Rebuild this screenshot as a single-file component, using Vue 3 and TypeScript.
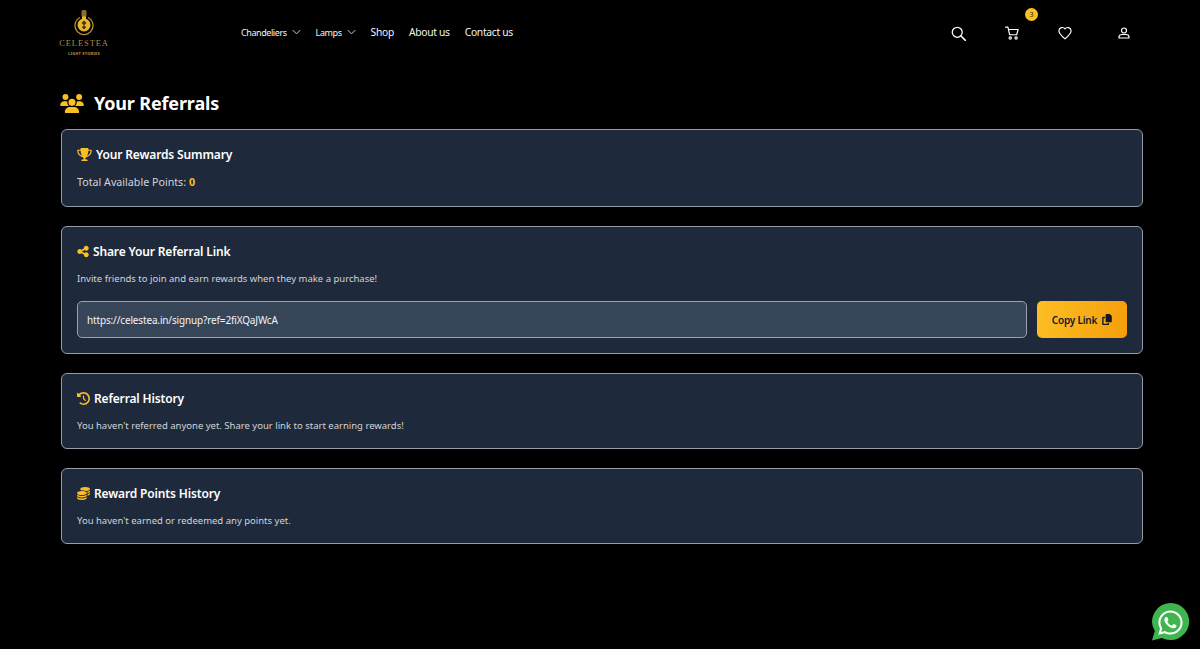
<script setup lang="ts">
const navItems = [
  { label: 'Chandeliers', small: true, chevron: true },
  { label: 'Lamps', small: true, chevron: true },
  { label: 'Shop', small: false, chevron: false },
  { label: 'About us', small: false, chevron: false },
  { label: 'Contact us', small: false, chevron: false },
]
const link = 'https://celestea.in/signup?ref=2fiXQaJWcA'
</script>

<template>
  <div class="page">
    <header class="header">
      <div class="logo">
        <svg class="logo__bulb" viewBox="0 0 20 26" width="20" height="26">
          <rect x="7.500" y="0" width="5" height="7" rx="1.500" fill="#8a6d2c" />
          <path d="M6 7.500A9 9 0 1 0 14 7.500" fill="none" stroke="#b8902f" stroke-width="1.300" />
          <path d="M8 6.500h4v2.200c2.600 1 4.500 3.500 4.500 6.300a6.500 6.500 0 0 1-13 0c0-2.800 1.900-5.300 4.500-6.300z" fill="#e8b62c" />
          <path d="M10 10.500l2.500 2.500-2.500 2.500-2.500-2.500zM10 15l2.200 2.200-2.200 2.200-2.200-2.200z" fill="#4a3608" />
        </svg>
        <span class="logo__name">CELESTEA</span>
        <span class="logo__sub">LIGHT STORIES</span>
      </div>
      <nav class="nav">
        <a v-for="item in navItems" :key="item.label" class="nav__item" :class="{ 'nav__item--small': item.small }">
          {{ item.label }}
          <svg v-if="item.chevron" class="nav__chevron" viewBox="0 0 12 8" width="9" height="6">
            <path d="M1 1.500l5 5 5-5" fill="none" stroke="#e5e5e5" stroke-width="1.200" />
          </svg>
        </a>
      </nav>
      <div class="actions">
        <svg class="actions__icon" viewBox="0 0 24 24" width="15" height="15">
          <circle cx="10" cy="10" r="8" fill="none" stroke="#fff" stroke-width="2" />
          <path d="M16 16l7 7" stroke="#fff" stroke-width="2.400" stroke-linecap="round" />
        </svg>
        <span class="cart">
          <svg class="actions__icon" viewBox="0 0 24 24" width="14" height="14">
            <path d="M1 2h4l3 13h12l2.500-9H6" fill="none" stroke="#fff" stroke-width="2" stroke-linejoin="round" stroke-linecap="round" />
            <circle cx="9" cy="20.500" r="2" fill="none" stroke="#fff" stroke-width="2" />
            <circle cx="19" cy="20.500" r="2" fill="none" stroke="#fff" stroke-width="2" />
          </svg>
          <span class="cart__badge">3</span>
        </span>
        <svg class="actions__icon" viewBox="0 0 24 24" width="14" height="14">
          <path d="M12 22C5 16 1.500 12.500 1.500 8A5.800 5.800 0 0 1 12 5a5.800 5.800 0 0 1 10.500 3c0 4.500-3.500 8-10.500 14z" fill="none" stroke="#fff" stroke-width="2" stroke-linejoin="round" />
        </svg>
        <svg class="actions__icon actions__icon--user" viewBox="0 0 24 24" width="12" height="12">
          <circle cx="12" cy="7" r="5" fill="none" stroke="#fff" stroke-width="2.400" />
          <path d="M2 22v-2c0-3 3-5 6-5h8c3 0 6 2 6 5v2z" fill="none" stroke="#fff" stroke-width="2.400" stroke-linejoin="round" />
        </svg>
      </div>
    </header>

    <main class="main">
      <h1 class="title">
        <svg class="title__icon" viewBox="0 0 640 512" width="24" height="19">
          <path fill="#fbbf24" d="M144 0a80 80 0 1 1 0 160A80 80 0 1 1 144 0zM512 0a80 80 0 1 1 0 160A80 80 0 1 1 512 0zM0 298.700C0 239.800 47.800 192 106.700 192h42.700c15.900 0 31 3.500 44.600 9.700c-1.300 7.200-1.900 14.700-1.900 22.300c0 38.200 16.800 72.500 43.300 96c-.2 0-.4 0-.7 0H21.300C9.600 320 0 310.400 0 298.700zM405.300 320c-.2 0-.4 0-.7 0c26.600-23.500 43.300-57.800 43.300-96c0-7.600-.7-15-1.900-22.300c13.600-6.300 28.700-9.700 44.600-9.700h42.700C592.200 192 640 239.800 640 298.700c0 11.800-9.600 21.300-21.300 21.300H405.300zM224 224a96 96 0 1 1 192 0 96 96 0 1 1 -192 0zM128 485.300C128 411.700 187.700 352 261.300 352H378.700C452.300 352 512 411.700 512 485.300c0 14.700-11.900 26.700-26.700 26.700H154.700c-14.700 0-26.700-11.900-26.700-26.700z" />
        </svg>
        Your Referrals
      </h1>

      <section class="card card--summary">
        <h2 class="card__title">
          <svg viewBox="0 0 576 512" width="15" height="13">
            <path fill="#fbbf24" d="M400 0H176c-26.500 0-48.100 21.800-47.100 48.200c.2 5.300 .4 10.600 .7 15.800H24C10.700 64 0 74.700 0 88c0 92.600 33.500 157 78.500 200.700c44.300 43.100 98.300 64.800 138.100 75.800c23.400 6.500 39.400 26 39.400 45.600c0 20.900-17 37.900-37.900 37.900H192c-17.700 0-32 14.300-32 32s14.300 32 32 32H384c17.700 0 32-14.300 32-32s-14.300-32-32-32H357.900C337 448 320 431 320 410.100c0-19.600 15.900-39.200 39.400-45.600c39.900-11 93.900-32.700 138.200-75.800C542.500 245 576 180.600 576 88c0-13.300-10.700-24-24-24H446.400c.3-5.200 .5-10.400 .7-15.800C448.100 21.800 426.500 0 400 0zM48.900 112h84.400c9.100 90.100 29.200 150.300 51.900 190.600c-24.900-11-50.800-26.500-73.200-48.300c-32-31.100-58-76-63-142.300zM464.100 254.300c-22.400 21.800-48.300 37.300-73.200 48.300c22.700-40.300 42.800-100.500 51.900-190.600h84.400c-5.100 66.300-31.100 111.200-63 142.300z" />
          </svg>
          Your Rewards Summary
        </h2>
        <p class="points">Total Available Points: <strong>0</strong></p>
      </section>

      <section class="card card--share">
        <h2 class="card__title">
          <svg viewBox="0 0 448 512" width="12" height="13">
            <path fill="#fbbf24" d="M352 224c53 0 96-43 96-96s-43-96-96-96s-96 43-96 96c0 4 .2 8 .7 11.900l-94.100 47C145.400 170.200 121.900 160 96 160c-53 0-96 43-96 96s43 96 96 96c25.900 0 49.400-10.200 66.600-26.900l94.100 47c-.5 3.900-.7 7.800-.7 11.900c0 53 43 96 96 96s96-43 96-96s-43-96-96-96c-25.900 0-49.400 10.200-66.600 26.900l-94.100-47c.5-3.900 .7-7.800 .7-11.900s-.2-8-.7-11.900l94.100-47C302.600 213.800 326.100 224 352 224z" />
          </svg>
          Share Your Referral Link
        </h2>
        <p class="card__text">Invite friends to join and earn rewards when they make a purchase!</p>
        <div class="share">
          <input class="share__input" :value="link" readonly />
          <button class="share__btn">
            Copy Link
            <svg viewBox="0 0 448 512" width="10" height="11">
              <path fill="#111827" d="M208 0H332.100c12.700 0 24.900 5.100 33.900 14.100l67.900 67.900c9 9 14.100 21.200 14.100 33.900V336c0 26.500-21.500 48-48 48H208c-26.500 0-48-21.500-48-48V48c0-26.500 21.500-48 48-48zM48 128h80v64H64V448H256V416h64v48c0 26.500-21.500 48-48 48H48c-26.500 0-48-21.500-48-48V176c0-26.500 21.500-48 48-48z" />
            </svg>
          </button>
        </div>
      </section>

      <section class="card card--info">
        <h2 class="card__title">
          <svg viewBox="0 0 512 512" width="13" height="13">
            <path fill="#fbbf24" d="M75 75L41 41C25.900 25.900 0 36.600 0 57.900V168c0 13.300 10.700 24 24 24H134.100c21.400 0 32.100-25.900 17-41l-30.800-30.800C155 85.500 203 64 256 64c106 0 192 86 192 192s-86 192-192 192c-40.800 0-78.600-12.700-109.700-34.400c-14.500-10.100-34.400-6.600-44.600 7.900s-6.600 34.400 7.900 44.600C151.200 495 201.700 512 256 512c141.400 0 256-114.600 256-256S397.400 0 256 0C185.300 0 121.300 28.700 75 75zm181 53c-13.300 0-24 10.700-24 24V256c0 6.400 2.500 12.500 7 17l72 72c9.400 9.400 24.600 9.400 33.900 0s9.400-24.600 0-33.900l-65-65V152c0-13.300-10.700-24-24-24z" />
          </svg>
          Referral History
        </h2>
        <p class="card__text">You haven't referred anyone yet. Share your link to start earning rewards!</p>
      </section>

      <section class="card card--info">
        <h2 class="card__title">
          <svg viewBox="0 0 512 512" width="13" height="13">
            <path fill="#fbbf24" d="M512 80c0 18-14.300 34.600-38.400 48c-29.100 16.100-72.500 27.500-122.300 30.900c-3.700-1.800-7.400-3.500-11.300-5C300.600 137.400 248.200 128 192 128c-8.300 0-16.400 .2-24.500 .6l-1.100-.6C142.300 114.600 128 98 128 80c0-44.200 86-80 192-80S512 35.800 512 80zM160.700 161.100c10.200-.7 20.700-1.100 31.300-1.100c62.200 0 117.400 12.300 152.500 31.400C369.300 204.900 384 221.700 384 240c0 4-.7 7.900-2.100 11.700c-4.600 13.200-17 25.300-35 35.500c-.1 .1-.3 .1-.4 .2c-.3 .2-.6 .3-.9 .5c-35 19.400-90.800 32-153.600 32c-59.600 0-112.900-11.300-148.200-29.100c-1.900-.9-3.700-1.900-5.500-2.900C14.300 274.600 0 258 0 240c0-34.800 53.400-64.500 128-75.400c10.500-1.500 21.400-2.700 32.700-3.500zM416 240c0-21.900-10.600-39.900-24.100-53.400c28.300-4.400 54.200-11.400 76.200-20.500c16.300-6.800 31.500-15.200 43.900-25.500V176c0 19.300-16.500 37.100-43.800 50.900c-14.600 7.400-32.400 13.700-52.400 18.500c.1-1.800 .2-3.500 .2-5.300zm-32 96c0 18-14.300 34.600-38.400 48c-1.800 1-3.600 1.900-5.500 2.900C304.900 404.700 251.600 416 192 416c-62.800 0-118.600-12.600-153.600-32C14.300 370.600 0 354 0 336V300.600c12.500 10.300 27.600 18.700 43.900 25.500C83.400 342.600 135.800 352 192 352s108.600-9.400 148.100-25.900c7.800-3.200 15.300-6.900 22.400-10.900c6.100-3.400 11.800-7.200 17.200-11.200c1.500-1.100 2.900-2.300 4.300-3.400V304v5.700V336zm32 0V304 278.100c19-4.200 36.500-9.500 52.100-16c16.300-6.800 31.500-15.200 43.900-25.500V272c0 10.500-5 21-14.900 30.900c-16.300 16.300-45 29.700-81.300 38.400c.1-1.700 .2-3.500 .2-5.300zM192 448c56.200 0 108.600-9.400 148.100-25.900c16.300-6.800 31.500-15.200 43.900-25.500V432c0 44.200-86 80-192 80S0 476.200 0 432V396.600c12.500 10.300 27.600 18.700 43.900 25.500C83.400 438.600 135.800 448 192 448z" />
          </svg>
          Reward Points History
        </h2>
        <p class="card__text">You haven't earned or redeemed any points yet.</p>
      </section>
    </main>

    <a class="whatsapp">
      <svg viewBox="0 0 40 40" width="39" height="39">
        <path fill="#3fb54f" d="M20 1a19 19 0 1 1-8.800 35.800L1 39.500l2.900-9.700A19 19 0 0 1 20 1z" />
        <g transform="translate(7.500 7) scale(0.0555)">
          <path fill="#fff" d="M380.900 97.100C339 55.100 283.200 32 223.900 32c-122.400 0-222 99.600-222 222 0 39.100 10.200 77.300 29.600 111L0 480l117.700-30.900c32.400 17.700 68.900 27 106.100 27h.1c122.300 0 224.100-99.600 224.100-222 0-59.300-25.200-115-67.100-157zm-157 341.600c-33.200 0-65.700-8.900-94-25.700l-6.700-4-69.800 18.300L72 359.200l-4.400-7c-18.500-29.400-28.200-63.300-28.200-98.200 0-101.700 82.800-184.500 184.600-184.500 49.300 0 95.600 19.200 130.400 54.100 34.800 34.900 56.200 81.200 56.100 130.500 0 101.800-84.900 184.600-186.600 184.600zm101.200-138.200c-5.500-2.800-32.800-16.200-37.900-18-5.100-1.900-8.800-2.800-12.500 2.800-3.700 5.600-14.300 18-17.600 21.800-3.200 3.700-6.500 4.200-12 1.400-32.600-16.300-54-29.100-75.500-66-5.700-9.800 5.700-9.100 16.300-30.300 1.800-3.700 .9-6.900-.5-9.700-1.400-2.800-12.500-30.100-17.100-41.200-4.500-10.800-9.100-9.300-12.500-9.500-3.200-.2-6.900-.2-10.600-.2-3.700 0-9.700 1.400-14.800 6.900-5.100 5.600-19.400 19-19.400 46.300 0 27.300 19.900 53.700 22.600 57.400 2.800 3.700 39.100 59.700 94.800 83.800 35.200 15.200 49 16.500 66.600 13.900 10.700-1.600 32.800-13.400 37.400-26.400 4.600-13 4.600-24.100 3.200-26.400-1.300-2.500-5-3.900-10.500-6.600z" />
        </g>
      </svg>
    </a>
  </div>
</template>

<style>
html,
body {
  background: #000;
}
</style>

<style scoped>
.page {
  position: relative;
  height: 649px;
  overflow: hidden;
  background: #000;
  color: #fff;
  font-family: "Noto Sans", "Open Sans", sans-serif;
}

.header {
  display: flex;
  align-items: flex-start;
  height: 66px;
  padding: 10px 0 0 60px;
  box-sizing: border-box;
}

.logo {
  display: flex;
  flex-direction: column;
  align-items: center;
  width: 48px;
}

.logo__bulb {
  display: block;
}

.logo__name {
  margin-top: 2px;
  font-family: "Liberation Serif", serif;
  font-size: 8.500px;
  line-height: 10px;
  letter-spacing: 0.9px;
  color: #a98b45;
  white-space: nowrap;
}

.logo__sub {
  margin-top: 3px;
  font-size: 4px;
  line-height: 5px;
  font-weight: 700;
  letter-spacing: 0.2px;
  color: #b09650;
  white-space: nowrap;
}

.nav {
  display: flex;
  align-items: center;
  gap: 15px;
  height: 14px;
  margin: 15px 0 0 133px;
}

.nav__item {
  display: flex;
  align-items: center;
  gap: 5px;
  font-size: 10.300px;
  letter-spacing: -0.3px;
  color: #f3f4f6;
  white-space: nowrap;
}

.nav__item--small {
  font-size: 9px;
  letter-spacing: -0.42px;
}

.nav__chevron {
  display: block;
}

.actions {
  display: flex;
  align-items: center;
  gap: 39px;
  height: 16px;
  margin: 15px 0 0 438.500px;
}

.actions__icon {
  display: block;
}

.actions__icon--user {
  margin-left: 7px;
}

.cart {
  position: relative;
  display: block;
}

.cart__badge {
  position: absolute;
  top: -18px;
  left: 19.500px;
  width: 13px;
  height: 13px;
  border-radius: 50%;
  background: #fbbf24;
  color: #111827;
  font-size: 7px;
  line-height: 13px;
  text-align: center;
}

.main {
  padding: 0 57px 0 60px;
}

.title {
  display: flex;
  align-items: center;
  gap: 10px;
  height: 26px;
  margin: 0 0 13px;
  padding-top: 24px;
  font-size: 18px;
  font-weight: 700;
  letter-spacing: -0.15px;
}

.title__icon {
  display: block;
}

.card {
  box-sizing: border-box;
  margin: 0 0 19px 1px;
  padding: 14.500px 15px 0;
  border: 1px solid #969ca6;
  border-radius: 6px;
  background: #1e293b;
}

.card--summary {
  height: 78px;
}

.card--share {
  height: 128px;
}

.card--info {
  height: 76px;
}

.card__title {
  display: flex;
  align-items: center;
  gap: 4px;
  height: 20px;
  margin: 0;
  font-size: 12px;
  font-weight: 600;
  letter-spacing: -0.15px;
  color: #fff;
}

.card__title svg {
  display: block;
  flex: none;
}

.card__text {
  margin: 10.500px 0 0;
  font-size: 9.500px;
  line-height: 14px;
  color: #d1d5db;
}

.points {
  margin: 10.500px 0 0;
  font-size: 10.700px;
  line-height: 14px;
  color: #d1d5db;
}

.points strong {
  color: #fbbf24;
}

.share {
  display: flex;
  gap: 10px;
  margin-top: 15px;
}

.share__input {
  flex: 1;
  box-sizing: border-box;
  height: 37px;
  padding: 0 9px;
  border: 1px solid #9ca3af;
  border-radius: 5px;
  outline: none;
  background: #374558;
  color: #f3f4f6;
  font-family: inherit;
  font-size: 10px;
  letter-spacing: -0.15px;
}

.share__btn {
  display: flex;
  align-items: center;
  justify-content: center;
  gap: 5px;
  width: 90px;
  height: 37px;
  padding: 0;
  border: none;
  border-radius: 5px;
  background: linear-gradient(100deg, #fbbf24, #f59e0b);
  color: #111827;
  font-family: inherit;
  font-size: 10px;
  font-weight: 600;
  letter-spacing: -0.2px;
}

.whatsapp {
  position: absolute;
  right: 10px;
  bottom: 8px;
  display: block;
}

.whatsapp svg {
  display: block;
}
</style>
